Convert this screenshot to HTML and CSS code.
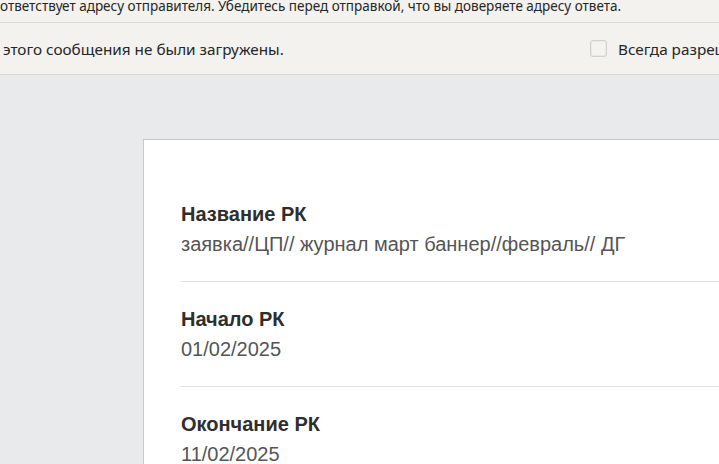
FILE: index.html
```html
<!DOCTYPE html>
<html lang="ru">
<head>
<meta charset="utf-8">
<link rel="stylesheet" href="styles.css">
</head>
<body>
<div class="notice">
  <div class="notice-row warn">ответствует адресу отправителя. Убедитесь перед отправкой, что вы доверяете адресу ответа.</div>
  <div class="notice-row images">
    <span class="images-text">этого сообщения не были загружены.</span>
    <label class="allow"><span class="checkbox"></span><span>Всегда разрешать</span></label>
  </div>
</div>
<main class="canvas">
  <section class="card">
    <div class="field">
      <div class="label">Название РК</div>
      <div class="value">заявка//ЦП// журнал март баннер//февраль// ДГ</div>
    </div>
    <div class="field">
      <div class="label">Начало РК</div>
      <div class="value">01/02/2025</div>
    </div>
    <div class="field">
      <div class="label">Окончание РК</div>
      <div class="value">11/02/2025</div>
    </div>
  </section>
</main>
</body>
</html>
```
FILE: styles.css
```css
html, body {
  margin: 0;
  padding: 0;
  width: 719px;
  height: 464px;
  overflow: hidden;
  background: #e9eaeb;
}
.notice {
  background: #f3f2ee;
  font-family: "Noto Sans", "Open Sans", sans-serif;
  color: #262626;
}
.notice-row {
  white-space: nowrap;
  overflow: hidden;
}
.warn {
  height: 22px;
  font-size: 13.5px;
  line-height: 13px;
  border-bottom: 1px solid #dcdbd7;
}
.images {
  height: 51px;
  display: grid;
  grid-template-columns: 587px auto;
  align-items: center;
  font-size: 15.3px;
  padding-left: 3px;
  border-bottom: 1px solid #d9d8d4;
}
.allow {
  display: flex;
  align-items: center;
  gap: 11px;
}
.checkbox {
  flex: 0 0 auto;
  width: 15px;
  height: 15px;
  border: 1px solid #d2d1cc;
  border-radius: 3px;
  background: #f4f3f0;
  box-shadow: inset 0 0 0 1px #eceae6;
}
.canvas {
  padding: 64px 0 0 143px;
}
.card {
  background: #fff;
  border-top: 1px solid #c9c9c9;
  border-left: 1px solid #c9c9c9;
  padding: 62px 0 0 37px;
  font-family: "Liberation Sans", Arial, sans-serif;
  height: 400px;
}
.field {
  padding: 25px 0 23px;
  border-top: 1px solid #dedede;
}
.field:first-child {
  border-top: none;
  padding-top: 0;
}
.label {
  font-weight: bold;
  font-size: 20px;
  line-height: 24px;
  color: #2e2e2e;
}
.value {
  font-size: 20px;
  line-height: 28px;
  margin-top: 4px;
  color: #555;
}
```
